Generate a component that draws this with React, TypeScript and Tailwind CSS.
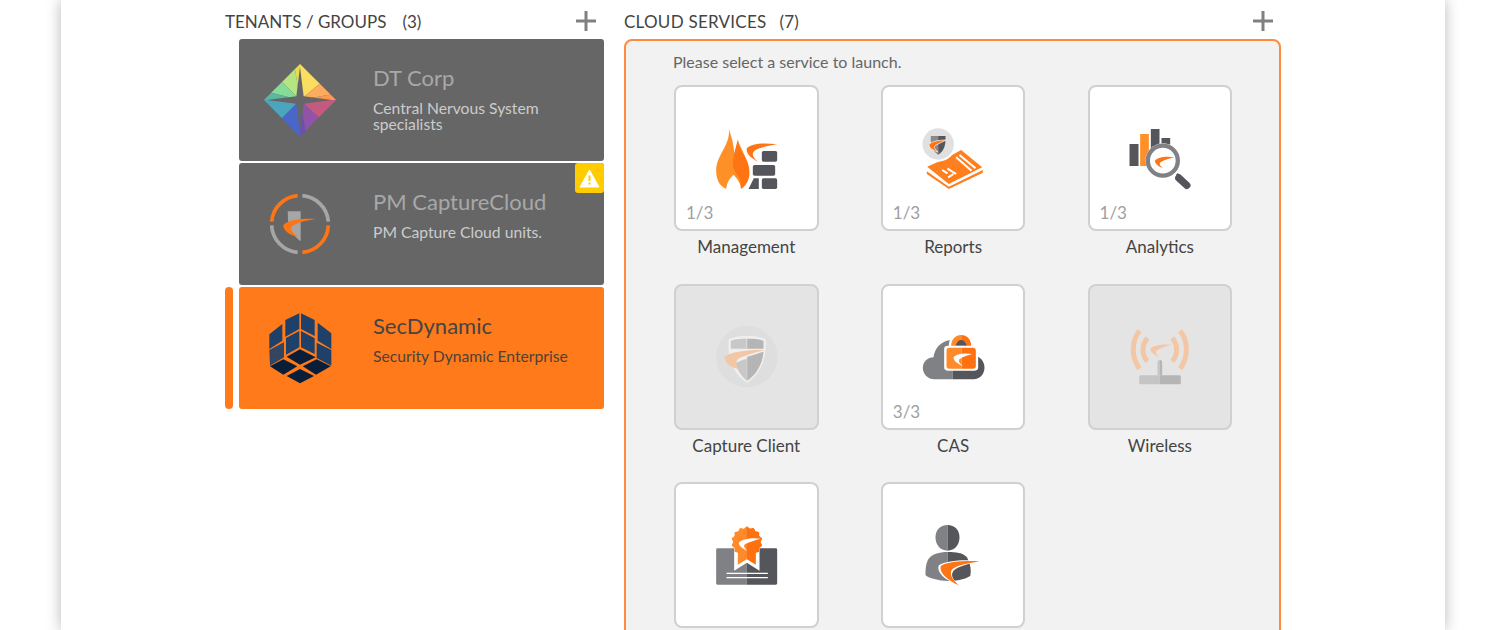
import React from "react";

function Plus() {
  return (
    <svg width="20" height="20" viewBox="0 0 20 20" className="shrink-0">
      <path d="M10 0V20M0 10H20" stroke="#808080" strokeWidth="3" />
    </svg>
  );
}

function DiamondLogo() {
  const c = "150,135";
  const tl = (t: number) => `${150 - 108 * t},${27 + 108 * t}`;
  const tr = (t: number) => `${150 + 108 * t},${27 + 108 * t}`;
  const br = (t: number) => `${258 - 108 * t},${135 + 110 * t}`;
  const bl = (t: number) => `${42 + 108 * t},${135 + 110 * t}`;
  const sectors: [string, string, string][] = [
    [tl(0), tl(0.14), "#eadb4e"],
    [tl(0.14), tl(0.5), "#b6e480"],
    [tl(0.5), tl(0.8), "#84dc98"],
    [tl(0.8), tl(1), "#5cb6a0"],
    [tr(0), tr(0.55), "#fbdd60"],
    [tr(0.55), tr(0.85), "#fdab5c"],
    [tr(0.85), tr(1), "#fd9850"],
    [br(0), br(0.48), "#c45a80"],
    [br(0.48), br(0.85), "#8f54a8"],
    [br(0.85), br(1), "#6a50b4"],
    [bl(0), bl(0.5), "#4aa5bd"],
    [bl(0.5), bl(1), "#4b66c9"],
  ];
  return (
    <svg width="100" height="100" viewBox="0 -15 300 300" className="shrink-0">
      {sectors.map(([a, b, f], i) => (
        <polygon key={i} points={`${c} ${a} ${b}`} fill={f} />
      ))}
      <path d="M150 36 L161 124 L246 135 L161 146 L150 234 L139 146 L50 135 L139 124Z" fill="#666666" />
    </svg>
  );
}

function CaptureLogo() {
  return (
    <svg width="100" height="100" viewBox="90 43 300 300" className="shrink-0" fill="none">
      <g strokeWidth="11">
        <path d="M155 186 A85 85 0 0 1 233 108" stroke="#ff7413" />
        <path d="M247 108 A85 85 0 0 1 325 186" stroke="#a6a6a6" />
        <path d="M155 197 A85 85 0 0 0 233 278" stroke="#a6a6a6" />
        <path d="M247 278 A85 85 0 0 0 325 197" stroke="#ff7413" />
      </g>
      <path d="M203 155 H242 V245 C230 235 215 222 205 205Z" fill="#a6a6a6" />
      <path d="M288 178 C250 175 205 180 190 196 C188 212 210 228 235 232 C215 218 208 208 218 198 C235 188 260 182 288 178Z" fill="#ff7413" />
    </svg>
  );
}

function CubeLogo() {
  const top = [
    "58,103 97,72 97,122 58,147",
    "106,60 148,40 148,87 106,110",
    "153,40 194,60 194,108 153,87",
    "203,68 244,100 244,147 203,122",
    "108,114 148,93 148,142 108,164",
    "153,93 194,115 194,162 153,142",
    "200,128 244,150 244,197 200,174",
  ];
  const bottom = [
    "150,148 197,172 150,194 110,170",
    "60,199 100,178 142,199 100,224",
    "158,199 200,178 242,199 198,224",
    "110,228 150,207 192,228 150,250",
  ];
  return (
    <svg width="100" height="100" viewBox="0 -6 300 300" className="shrink-0">
      <defs>
        <pattern id="cube-dots" width="5" height="5" patternUnits="userSpaceOnUse">
          <rect width="5" height="5" fill="#1a3a63" />
          <circle cx="2.5" cy="2.5" r="1.1" fill="#e8904a" />
        </pattern>
      </defs>
      {top.map((p) => (
        <polygon key={p} points={p} fill="#1f4068" />
      ))}
      <polygon points="58,150 102,127 102,172 60,197" fill="url(#cube-dots)" />
      {bottom.map((p) => (
        <polygon key={p} points={p} fill="#0a1e3a" />
      ))}
    </svg>
  );
}

function Warning() {
  return (
    <div className="absolute right-0 top-0 flex h-[30px] w-[29px] items-center justify-center rounded-[3px] bg-[#ffcc00]">
      <svg width="21" height="19" viewBox="0 0 21 19">
        <path d="M10.5 1 L20 18 H1Z" fill="#ffffff" stroke="#ffffff" strokeLinejoin="round" />
        <path d="M10.5 6.5V12M10.5 13.5V15.5" stroke="#ffcc00" strokeWidth="2" />
      </svg>
    </div>
  );
}

function TenantRow({
  logo,
  name,
  desc,
  selected,
  warning,
}: {
  logo: React.ReactNode;
  name: string;
  desc: string;
  selected?: boolean;
  warning?: boolean;
}) {
  return (
    <div className="flex h-[122px]">
      <div className={selected ? "mr-[6px] w-2 rounded bg-[#ff7a1a]" : "mr-[6px] w-2"} />
      <div
        className={
          selected
            ? "relative flex flex-1 rounded-[3px] bg-[#ff7a1a] pl-[11px]"
            : "relative flex flex-1 rounded-[3px] bg-[#666666] pl-[11px]"
        }
      >
        <div className="flex items-center">{logo}</div>
        <div className="ml-[23px] pt-[25px]">
          <div className={selected ? "text-[22px] leading-[28px] text-[#444444]" : "text-[22px] leading-[28px] text-[#a8a8a8]"}>
            {name}
          </div>
          <div className={selected ? "mt-2 w-[205px] text-[15.7px] leading-4 text-[#4d4238]" : "mt-2 w-[205px] text-[15.7px] leading-4 text-[#cccccc]"}>
            {desc}
          </div>
        </div>
        {warning && <Warning />}
      </div>
    </div>
  );
}

const G1 = "#808185";
const G2 = "#55565b";

function Icon({ box, children }: { box: string; children: React.ReactNode }) {
  return (
    <svg width="100" height="100" viewBox={box} className="shrink-0">
      {children}
    </svg>
  );
}

function ManagementIcon() {
  return (
    <Icon box="79.5 84 300 300">
      <path d="M178 148 C184 195 140 225 140 272 C140 305 156 322 172 327 L212 327 C226 318 238 300 238 270 C238 240 222 225 205 180 C202 200 198 210 194 222 C194 200 188 175 178 148Z" fill="#ff9027" />
      <path d="M205 180 C208 215 242 240 240 280 C239 305 226 320 214 327 C218 305 205 290 193 268 C185 250 195 215 205 180Z" fill="#ff7413" />
      <path d="M170 327 C172 307 180 296 192 284 C204 297 214 310 214 327Z" fill="#ffffff" />
      <path d="M322 193 C285 188 245 190 232 205 C228 220 245 235 265 245 C250 232 245 222 255 212 C270 202 295 198 322 193Z" fill="#ff7413" />
      <g fill={G2}>
        <rect x="277" y="213" width="46" height="32" rx="5" />
        <rect x="250" y="255" width="67" height="32" rx="5" />
        <rect x="277" y="295" width="46" height="32" rx="5" />
        <path d="M253 295 H268 V327 H237Z" />
      </g>
    </Icon>
  );
}

function ReportsIcon() {
  return (
    <Icon box="700.5 84 300 300">
      <path d="M772 274 L838 320 L940 270 V278 L838 327 L772 282Z" fill="#ff7f1e" />
      <path d="M875 210 L938 262 L838 312 L773 260 L830 235Z" fill="#ff7f1e" />
      <path d="M870 225 L918 265 M860 232 L906 272" stroke="#ffffff" strokeWidth="6" fill="none" />
      <path d="M818 270 L834 280 M834 266 L860 282 M836 292 L852 282" stroke="#ffffff" strokeWidth="6" fill="none" />
      <circle cx="806" cy="192" r="53" fill="#ffffff" />
      <circle cx="806" cy="192" r="47" fill="#e0e0e0" />
      <path d="M784 168 H806 V224 C792 216 782 200 784 168Z" fill="#8a8a8e" />
      <path d="M806 168 H828 C830 200 820 216 806 224Z" fill={G2} />
      <path d="M830 180 C808 180 786 184 778 194 C778 204 792 212 806 216 C794 206 792 200 798 196 C808 190 820 186 830 180Z" fill="#ff7413" stroke="#ffffff" strokeWidth="2" />
    </Icon>
  );
}

function AnalyticsIcon() {
  return (
    <Icon box="91.5 324 300 300">
      <rect x="150" y="432" width="27" height="66" fill={G2} />
      <rect x="182" y="402" width="26" height="96" fill="#ff9027" />
      <rect x="214" y="387" width="26" height="60" fill={G2} />
      <rect x="246" y="414" width="26" height="20" fill={G2} />
      <circle cx="250" cy="482" r="52" fill="#ffffff" />
      <circle cx="250" cy="482" r="45" fill="#ffffff" stroke={G1} strokeWidth="13" />
      <path d="M284 472 C260 468 235 472 226 482 C228 494 240 500 250 505 C240 496 238 490 244 486 C255 480 270 476 284 472Z" fill="#ff7413" />
      <path d="M298 534 L322 556" stroke={G2} strokeWidth="22" strokeLinecap="round" />
      <path d="M292 522 L298 528" stroke={G2} strokeWidth="8" />
    </Icon>
  );
}

function CaptureClientIcon() {
  return (
    <Icon box="79.5 81 300 300">
      <circle cx="232" cy="230" r="92" fill="#dedede" />
      <path d="M178 178 C200 168 215 168 232 168 V308 C205 292 170 250 178 178Z" fill="#efefef" />
      <path d="M232 168 C250 168 265 168 288 178 C294 250 260 292 232 308Z" fill="#efefef" />
      <path d="M184 182 C200 176 215 176 231 176 V206 H184Z" fill="#c8c8c8" />
      <path d="M233 176 C250 176 265 176 282 182 V206 H233Z" fill="#b5b5b5" />
      <path d="M196 248 C204 272 218 290 232 302 V236 C215 240 205 248 196 248Z" fill="#c8c8c8" />
      <path d="M233 230 C248 226 265 220 282 215 C280 250 260 285 233 302Z" fill="#b5b5b5" />
      <path d="M286 210 C240 208 185 214 165 230 C165 250 185 262 208 268 C195 250 200 238 215 232 C235 224 260 216 286 210Z" fill="#f3c6a5" />
    </Icon>
  );
}

function CasIcon() {
  return (
    <Icon box="700.5 81 300 300">
      <path d="M850 298 H795 C775 298 760 282 760 264 C760 245 775 232 792 232 C795 205 815 182 845 180 L850 180Z" fill={G1} />
      <path d="M850 298 H912 C932 298 945 282 945 262 C945 245 932 230 915 226 C905 200 880 180 850 180Z" fill={G2} />
      <path d="M875 160 C850 160 838 176 838 198 V210 H912 V198 C912 176 900 160 875 160Z" fill="#ffffff" />
      <path d="M875 165 V210 H845 V198 C845 178 858 165 875 165Z" fill="#ff8a2a" />
      <path d="M875 165 C892 165 905 178 905 198 V210 H875Z" fill="#ff7010" />
      <path d="M858 197 C862 186 868 180 875 180 C882 180 888 186 892 197Z" fill={G2} />
      <rect x="824" y="197" width="102" height="75" rx="10" fill="#ffffff" />
      <path d="M876 203 H840 C833 203 831 206 831 212 V258 C831 264 834 266 840 266 H876Z" fill="#ff8a2a" />
      <path d="M876 203 H910 C916 203 919 206 919 212 V258 C919 264 916 266 910 266 H876Z" fill="#ff7010" />
      <path d="M908 222 C885 218 860 222 852 232 C852 244 865 252 880 258 C868 248 865 240 872 236 C882 230 895 226 908 222Z" fill="#ffffff" />
    </Icon>
  );
}

function WirelessIcon() {
  return (
    <Icon box="91.5 81 300 300">
      <g fill="none" stroke="#f3c6a5" strokeWidth="15">
        <path d="M180 152 C155 185 155 232 180 266" />
        <path d="M204 174 C186 195 186 225 204 244" />
        <path d="M302 152 C327 185 327 232 302 266" />
        <path d="M278 174 C296 195 296 225 278 244" />
      </g>
      <path d="M275 194 C250 192 222 196 212 206 C214 218 228 226 240 232 C228 222 226 214 234 210 C246 204 260 198 275 194Z" fill="#f3c6a5" />
      <path d="M234 248 C234 240 241 240 241 240 V286 H234Z" fill="#c5c5c5" />
      <path d="M241 240 C248 240 248 248 248 248 V286 H241Z" fill="#b5b5b5" />
      <path d="M184 286 H241 V313 H184 C180 313 179 311 179 308 V291 C179 288 180 286 184 286Z" fill="#c5c5c5" />
      <path d="M241 286 H299 C303 286 304 288 304 291 V308 C304 311 303 313 299 313 H241Z" fill="#b5b5b5" />
    </Icon>
  );
}

function CertificateIcon() {
  const n = 14;
  const pts: string[] = [];
  for (let i = 0; i < n * 2; i++) {
    const r = i % 2 ? 41 : 47;
    const a = (Math.PI * i) / n;
    pts.push(`${(232 + r * Math.sin(a)).toFixed(1)},${(186 - r * Math.cos(a)).toFixed(1)}`);
  }
  return (
    <Icon box="79.5 75 300 300">
      <defs>
        <clipPath id="gear-right">
          <rect x="232" y="130" width="60" height="110" />
        </clipPath>
      </defs>
      <path d="M145 205 H232 V314 H145 C141 314 140 312 140 309 V210 C140 207 141 205 145 205Z" fill={G1} />
      <path d="M232 205 H318 C322 205 323 207 323 210 V309 C323 312 322 314 318 314 H232Z" fill={G2} />
      <path d="M194 200 H270 V272 L232 248 L194 272Z" fill="#ffffff" />
      <path d="M205 205 H232 V238 L205 254Z" fill="#ff8a2a" />
      <path d="M232 205 H259 V254 L232 238Z" fill="#ff7010" />
      <polygon points={pts.join(" ")} fill="#ff8a2a" />
      <polygon points={pts.join(" ")} fill="#ff7010" clipPath="url(#gear-right)" />
      <path d="M274 176 C250 172 218 176 208 188 C208 198 220 206 234 212 C224 204 220 196 228 192 C240 186 258 180 274 176Z" fill="#ffffff" />
      <path d="M171 280 H295 M171 293 H295" stroke="#ffffff" strokeWidth="4" />
    </Icon>
  );
}

function UserIcon() {
  return (
    <Icon box="700.5 75 300 300">
      <path d="M834 135 C812 135 798 150 798 172 C798 195 812 212 834 212Z" fill={G1} />
      <path d="M834 135 C856 135 870 150 870 172 C870 195 856 212 834 212Z" fill={G2} />
      <path d="M834 216 C810 216 785 222 775 240 C768 255 768 270 768 285 C775 295 810 302 834 303Z" fill={G1} />
      <path d="M834 216 C860 216 880 218 892 232 C905 255 905 275 902 288 C885 300 855 303 834 303Z" fill={G2} />
      <path d="M935 243 C890 238 830 240 808 256 C800 275 822 300 872 318 C850 300 842 285 852 272 C870 256 905 250 935 243Z" fill="#ffffff" />
      <path d="M930 244 C890 242 835 244 814 258 C808 275 830 300 868 316 C848 298 838 282 848 268 C866 254 900 250 930 244Z" fill="#ff7413" />
    </Icon>
  );
}

function Service({
  icon,
  label,
  count,
  disabled,
}: {
  icon: React.ReactNode;
  label?: string;
  count?: string;
  disabled?: boolean;
}) {
  return (
    <div className="flex flex-col items-center">
      <div
        className={
          disabled
            ? "relative flex h-[146px] w-full items-center justify-center rounded-lg border-2 border-[#d0d0d0] bg-[#e4e4e4]"
            : "relative flex h-[146px] w-full items-center justify-center rounded-lg border-2 border-[#d0d0d0] bg-white"
        }
      >
        {icon}
        {count && <span className="absolute bottom-[6px] left-[10px] text-[17px] leading-5 text-[#a0a0a0]">{count}</span>}
      </div>
      {label && <div className="mt-1 text-[17px] leading-6 text-[#444444]">{label}</div>}
    </div>
  );
}

export default function App() {
  return (
    <div className="h-[630px] w-[1500px] overflow-hidden bg-white font-['Lato',sans-serif]">
      <div className="ml-[61px] h-[630px] w-[1384px] bg-white pl-[164px] pt-[11px] shadow-[0_0_14px_rgba(0,0,0,0.28)]">
        <div className="flex gap-5">
          <div className="w-[379px]">
            <div className="mb-2 flex h-5 items-center justify-between pr-2 text-[17px] text-[#444444]">
              <span className="pt-[2px]">
                TENANTS / GROUPS<span className="ml-4">(3)</span>
              </span>
              <Plus />
            </div>
            <div className="flex flex-col gap-[2px]">
              <TenantRow logo={<DiamondLogo />} name="DT Corp" desc="Central Nervous System specialists" />
              <TenantRow logo={<CaptureLogo />} name="PM CaptureCloud" desc="PM Capture Cloud units." warning />
              <TenantRow logo={<CubeLogo />} name="SecDynamic" desc="Security Dynamic Enterprise" selected />
            </div>
          </div>
          <div className="w-[657px]">
            <div className="mb-2 flex h-5 items-center justify-between pr-2 text-[17px] text-[#444444]">
              <span className="pt-[2px] tracking-[0.25px]">
                CLOUD SERVICES<span className="ml-[13px]">(7)</span>
              </span>
              <Plus />
            </div>
            <div className="h-[640px] rounded-lg border-2 border-[#ff8c3a] bg-[#f2f2f2] pl-[47px] pt-[11px]">
              <div className="h-5 text-base leading-5 text-[#666666]">Please select a service to launch.</div>
              <div className="ml-px mt-[13px] grid grid-cols-[144.6px_144.6px_144.6px] gap-x-[62.2px] gap-y-[24.5px]">
                <Service icon={<ManagementIcon />} label="Management" count="1/3" />
                <Service icon={<ReportsIcon />} label="Reports" count="1/3" />
                <Service icon={<AnalyticsIcon />} label="Analytics" count="1/3" />
                <Service icon={<CaptureClientIcon />} label="Capture Client" disabled />
                <Service icon={<CasIcon />} label="CAS" count="3/3" />
                <Service icon={<WirelessIcon />} label="Wireless" disabled />
                <Service icon={<CertificateIcon />} />
                <Service icon={<UserIcon />} />
              </div>
            </div>
          </div>
        </div>
      </div>
    </div>
  );
}
